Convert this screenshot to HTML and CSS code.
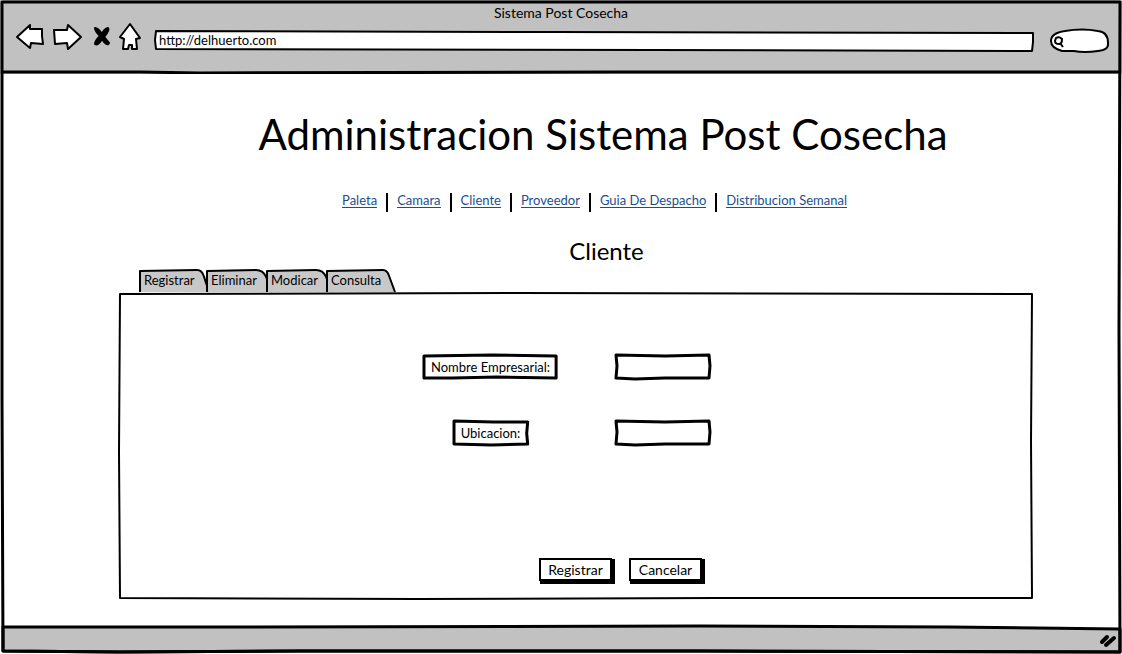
FILE: index.html
```html
<!DOCTYPE html>
<html lang="es">
<head>
<meta charset="utf-8">
<title>Sistema Post Cosecha</title>
<link rel="stylesheet" href="styles.css">
</head>
<body>
<div class="window">
  <svg class="sketch" viewBox="0 0 1122 654" preserveAspectRatio="none" aria-hidden="true"><path d="M2 2L620 2L1120 2L1119 330L1120 652L700 651L300 651L120 652L3 651L2 400L2 150L2 60Z"/></svg>
  <header class="chrome">
    <div class="window-title">Sistema Post Cosecha</div>
    <div class="toolbar">
      <button class="tool back" type="button" aria-label="Atrás"><svg width="30" height="30" viewBox="0 0 30 30"><path d="M2 15L15 3V7L27 7L27 14L28 22L16 21L15 26Z"/></svg></button>
      <button class="tool forward" type="button" aria-label="Adelante"><svg width="30" height="30" viewBox="0 0 30 30"><path d="M2 8L15 8L16 3L29 15L16 27L15 21L3 22Z"/></svg></button>
      <button class="tool stop" type="button" aria-label="Detener"><svg width="20" height="30" viewBox="0 0 20 30"><path class="solid" d="M3 6Q6 6 10 12Q12 7 16 6Q18 8 12 15L17 21Q15 25 10 17Q6 24 3 22Q3 19 8 14Q3 9 3 6Z"/></svg></button>
      <button class="tool home" type="button" aria-label="Inicio"><svg width="24" height="30" viewBox="0 0 24 30"><path d="M2 15L12 2L22 16L18 17L19 27L14 27L14 23H11L10 27L5 27L6 17Z"/></svg></button>
      <div class="address">
        <svg class="sketch" viewBox="0 0 881 22" preserveAspectRatio="none" aria-hidden="true"><path class="paper" d="M2 1L400 2L879 3L879 12L878 21L500 20L2 19L1 10Z"/></svg>
        <input class="field" type="text" aria-label="Dirección" value="http://delhuerto.com">
      </div>
      <div class="search">
        <svg class="sketch" viewBox="0 0 60 25" preserveAspectRatio="none" aria-hidden="true"><path class="paper" d="M15 3Q32 0 48 3Q58 4 58 15Q59 22 48 23Q34 25 24 23H12Q1 20 1 13Q1 5 15 3Z"/></svg>
        <svg class="lens" width="12" height="14" viewBox="0 0 12 14" aria-hidden="true"><path d="M3 3Q6 1 9 4Q9 9 6 9Q2 9 2 6ZM7 8L10 12"/></svg>
        <input class="field" type="search" aria-label="Buscar">
      </div>
    </div>
    <svg class="rule" viewBox="0 0 1122 4" preserveAspectRatio="none" aria-hidden="true"><path d="M2 2H140L200 3L620 2L1120 2"/></svg>
  </header>
  <main class="page">
    <h1 class="title">Administracion Sistema Post Cosecha</h1>
    <nav class="links">
      <a href="#paleta">Paleta</a>
      <a href="#camara">Camara</a>
      <a href="#cliente">Cliente</a>
      <a href="#proveedor">Proveedor</a>
      <a href="#guia">Guia De Despacho</a>
      <a href="#distribucion">Distribucion Semanal</a>
    </nav>
    <h2 class="subtitle">Cliente</h2>
    <div class="tabs" role="tablist">
      <button class="tab first" type="button" role="tab"><svg class="sketch" viewBox="0 0 70 24" preserveAspectRatio="none" aria-hidden="true"><path d="M1 24V2L58 1Q63 1 65 8L70 24"/></svg><span>Registrar</span></button>
      <button class="tab" type="button" role="tab"><svg class="sketch" viewBox="0 0 70 24" preserveAspectRatio="none" aria-hidden="true"><path d="M1 24V2L50 1Q57 1 60 8L66 24"/></svg><span>Eliminar</span></button>
      <button class="tab" type="button" role="tab"><svg class="sketch" viewBox="0 0 70 24" preserveAspectRatio="none" aria-hidden="true"><path d="M1 24V2L50 1Q57 1 60 8L66 24"/></svg><span>Modicar</span></button>
      <button class="tab" type="button" role="tab"><svg class="sketch" viewBox="0 0 70 24" preserveAspectRatio="none" aria-hidden="true"><path d="M1 24V2L57 1Q61 1 63 7L69 24"/></svg><span>Consulta</span></button>
    </div>
    <form class="panel">
      <svg class="sketch outline" viewBox="0 0 915 309" preserveAspectRatio="none" aria-hidden="true"><path d="M2 2L400 1L914 2L913 150L914 307L600 307L300 308L2 307L1 160Z"/></svg>
      <div class="fields">
        <label class="tag" for="nombre"><svg class="sketch" viewBox="0 0 137 27" preserveAspectRatio="none" aria-hidden="true"><path d="M1 2L70 1L135 2L135 14L135 25L75 24L30 25L1 25Z"/></svg><span>Nombre Empresarial:</span></label>
        <div class="entry"><svg class="sketch" viewBox="0 0 96 26" preserveAspectRatio="none" aria-hidden="true"><path d="M1 1L50 2L94 1L95 12L94 24L50 24L20 25L1 24L2 12Z"/></svg><input class="field" id="nombre" type="text"></div>
        <label class="tag" for="ubicacion"><svg class="sketch" viewBox="0 0 75 27" preserveAspectRatio="none" aria-hidden="true"><path d="M1 1L40 2L74 2L73 14L74 25L38 26L1 25Z"/></svg><span>Ubicacion:</span></label>
        <div class="entry"><svg class="sketch" viewBox="0 0 96 26" preserveAspectRatio="none" aria-hidden="true"><path d="M1 1L50 2L94 1L95 12L94 24L50 24L20 25L1 24L2 12Z"/></svg><input class="field" id="ubicacion" type="text"></div>
      </div>
      <div class="actions">
        <button class="action" type="button">Registrar</button>
        <button class="action" type="button">Cancelar</button>
      </div>
    </form>
  </main>
  <footer class="status">
    <svg class="sketch" viewBox="0 0 1122 29" preserveAspectRatio="none" aria-hidden="true"><path class="bar" d="M3 2L200 2L700 1L950 2L1120 4V27L700 26L300 26L120 27L3 26Z"/></svg>
    <svg class="grip" width="18" height="15" viewBox="0 0 18 15" aria-hidden="true"><path d="M3 9L8 4M7 12L15 5"/></svg>
  </footer>
</div>
</body>
</html>
```
FILE: styles.css
```css
* { box-sizing: border-box; }
body {
  margin: 0;
  background: #fff;
  color: #000;
  font-family: Lato, "Open Sans", sans-serif;
  font-size: 14px;
  line-height: 16px;
}
button, input { font: inherit; color: inherit; }
button { padding: 0; border: 0; background: none; cursor: pointer; }

.window {
  position: relative;
  display: flex;
  flex-direction: column;
  min-height: 100vh;
}
.sketch {
  position: absolute;
  inset: 0;
  width: 100%;
  height: 100%;
  overflow: visible;
  pointer-events: none;
}
.sketch path {
  fill: none;
  stroke: #000;
  stroke-width: 3px;
  stroke-linejoin: round;
  vector-effect: non-scaling-stroke;
}
.window > .sketch { z-index: 1; }
.sketch .paper { fill: #fff; }
.sketch .bar { fill: #c1c1c1; }
.outline path { stroke-width: 2px; }

.chrome {
  display: flex;
  flex-direction: column;
  background: #c1c1c1;
}
.window-title { padding-top: 5px; text-align: center; }
.toolbar {
  display: flex;
  align-items: flex-start;
  height: 49px;
  padding: 1px 12px 0 15px;
}
.tool svg { display: block; }
.tool path {
  fill: #fff;
  stroke: #000;
  stroke-width: 2px;
  stroke-linejoin: round;
}
.tool .solid { fill: #000; }
.forward { margin-left: 7px; }
.stop { margin-left: 10px; }
.home { margin-left: 6px; }
.address {
  position: relative;
  flex: 1;
  height: 22px;
  margin: 8px 15px 0 12px;
}
.address .paper, .search .paper { stroke-width: 2px; }
.search {
  position: relative;
  width: 60px;
  height: 25px;
  margin-top: 6px;
}
.lens {
  position: absolute;
  left: 3px;
  top: 7px;
  fill: none;
  stroke: #000;
  stroke-width: 2px;
}
.field {
  position: relative;
  display: block;
  width: 100%;
  height: 100%;
  padding: 0 5px 2px;
  border: 0;
  outline: 0;
  background: transparent;
  font-size: 13px;
}
.search .field { padding-left: 18px; }
.rule { display: block; width: 100%; height: 4px; }
.rule path { fill: none; stroke: #000; stroke-width: 3px; }

.page {
  flex: 1;
  display: flex;
  flex-direction: column;
  padding: 36px 89px 25px 118px;
}
.title {
  margin: 0;
  padding-left: 55px;
  font-size: 42px;
  font-weight: 400;
  line-height: 48px;
  text-align: center;
}
.links {
  display: flex;
  justify-content: center;
  margin-top: 35px;
  padding-left: 38px;
  font-size: 13px;
}
.links a {
  position: relative;
  margin: 0 10px 1px;
  border-bottom: 1px solid #1b4f8c;
  color: #1b4f8c;
  line-height: 14px;
  text-decoration: none;
}
.links a + a::before {
  content: "";
  position: absolute;
  left: -11px;
  top: 0;
  width: 2px;
  height: 19px;
  background: #000;
}
.subtitle {
  margin: 30px 0 0;
  padding-left: 62px;
  font-size: 24px;
  font-weight: 400;
  line-height: 24px;
  text-align: center;
}
.tabs {
  display: flex;
  margin-top: 6px;
  padding-left: 21px;
}
.tab {
  position: relative;
  width: 60px;
  height: 23px;
  padding-bottom: 1px;
  font-size: 13px;
  text-align: left;
}
.first { width: 67px; }
.tab .sketch { width: 70px; }
.tab .sketch path { fill: #c8c8c8; stroke-width: 2px; }
.tab span { position: relative; padding-left: 5px; }

.panel {
  position: relative;
  flex: 1;
  display: flex;
  flex-direction: column;
  padding: 62px 0 19px;
}
.fields {
  display: grid;
  grid-template-columns: 137px 96px;
  justify-content: center;
  gap: 40px 56px;
  padding-right: 18px;
}
.tag {
  position: relative;
  justify-self: center;
  padding: 5px 8px;
  font-size: 13px;
  white-space: nowrap;
}
.tag span { position: relative; }
.entry { position: relative; height: 26px; }
.actions {
  display: flex;
  justify-content: center;
  gap: 17px;
  margin-top: auto;
  padding-left: 90px;
}
.action {
  width: 73px;
  height: 23px;
  border: 2px solid #000;
  background: #fff;
  line-height: 18px;
  box-shadow: 2px 2px 0 1px #000;
}

.status {
  position: relative;
  display: flex;
  justify-content: flex-end;
  height: 29px;
  padding: 8px 5px 0 0;
}
.grip {
  position: relative;
  fill: none;
  stroke: #000;
  stroke-width: 4px;
  stroke-linecap: round;
}
```
